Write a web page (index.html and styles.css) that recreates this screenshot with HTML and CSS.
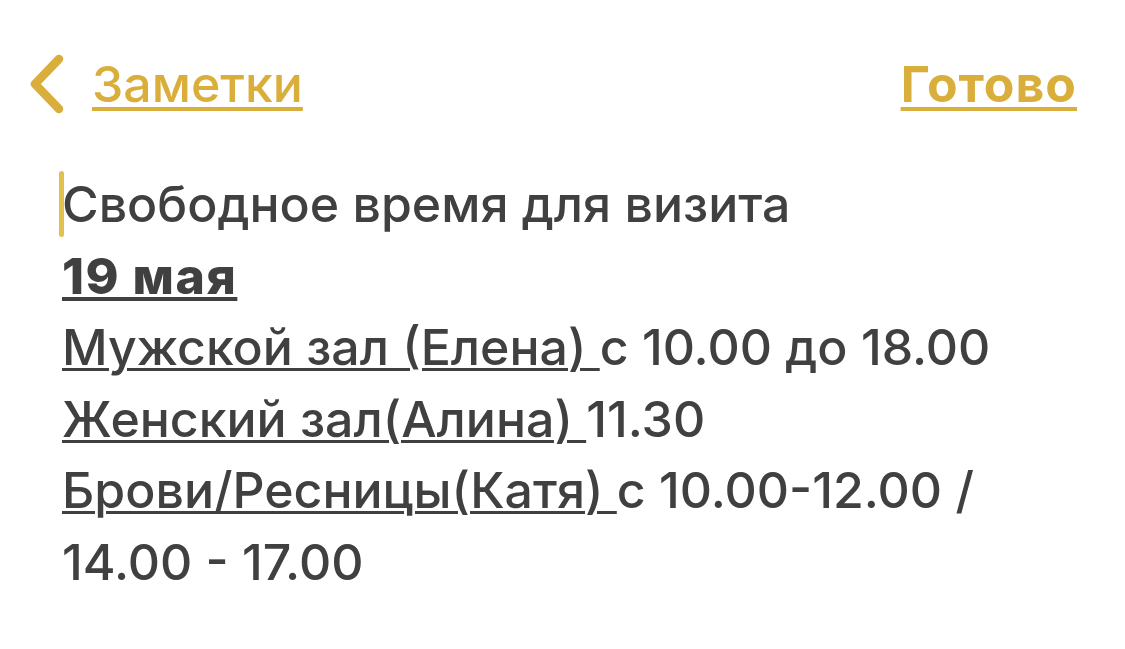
FILE: index.html
```html
<!DOCTYPE html>
<html lang="ru">
<head>
<meta charset="utf-8">
<link rel="stylesheet" href="styles.css">
</head>
<body>
<div class="page">
  <header class="nav">
    <a class="back">
      <svg class="chev" width="38" height="60" viewBox="0 0 38 60"><path d="M32 5 L8 30 L32 55" fill="none" stroke="#D9AE3A" stroke-width="8.5" stroke-linecap="round" stroke-linejoin="round"/></svg>
      <span class="back-label">Заметки</span>
    </a>
    <a class="done">Готово</a>
  </header>
  <main class="note">
    <p class="line first"><span class="caret"></span>Свободное время для визита</p>
    <p class="line"><b class="u">19 мая</b></p>
    <p class="line"><span class="u">Мужской зал (Елена) </span>с 10.00 до 18.00</p>
    <p class="line"><span class="u">Женский зал(Алина) </span>11.30</p>
    <p class="line"><span class="u">Брови/Ресницы(Катя) </span>с 10.00-12.00 / 14.00 - 17.00</p>
  </main>
</div>
</body>
</html>
```
FILE: styles.css
```css
html, body {
  margin: 0;
  padding: 0;
  background: #ffffff;
}
body {
  font-family: Inter, "Noto Sans", sans-serif;
  color: #404040;
}
.page {
  width: 1125px;
  height: 649px;
  overflow: hidden;
}
.nav {
  display: flex;
  justify-content: space-between;
  align-items: center;
  padding: 54px 48px 0 27px;
  height: 60px;
}
.back {
  display: flex;
  align-items: center;
  gap: 27px;
  color: #D9AE3A;
}
.chev {
  display: block;
}
.back-label, .done {
  font-size: 50px;
  font-weight: 500;
  color: #D9AE3A;
  text-decoration: underline;
  text-decoration-thickness: 4px;
  text-underline-offset: 5px;
  line-height: 60px;
}
.done {
  font-weight: 700;
  letter-spacing: 1px;
}
.note {
  padding: 55px 0 0 62px;
  width: 960px;
}
.line {
  margin: 0;
  font-size: 50px;
  line-height: 71.6px;
  font-weight: 500;
  position: relative;
}
.u {
  text-decoration: underline;
  text-decoration-thickness: 3px;
  text-underline-offset: 3px;
}
b.u {
  font-weight: 800;
  letter-spacing: 1.5px;
  text-decoration-thickness: 4px;
}
.caret {
  position: absolute;
  left: -3px;
  top: 2px;
  width: 5px;
  height: 66px;
  border-radius: 2.5px;
  background: #E2C04E;
}
```
